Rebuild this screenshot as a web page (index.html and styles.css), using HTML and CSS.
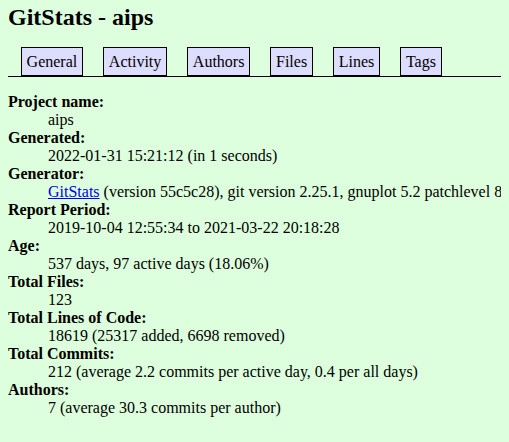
FILE: index.html
```html
<!DOCTYPE html>
<html class="root">
<head>
<meta charset="utf-8">
<title>GitStats - aips</title>
<link rel="stylesheet" href="styles.css">
</head>
<body class="page">
<h1 class="title">GitStats - aips</h1>
<div class="nav">
<ul class="nav-list">
<li class="nav-item"><a class="nav-link" href="#">General</a></li>
<li class="nav-item"><a class="nav-link" href="#">Activity</a></li>
<li class="nav-item"><a class="nav-link" href="#">Authors</a></li>
<li class="nav-item"><a class="nav-link" href="#">Files</a></li>
<li class="nav-item"><a class="nav-link" href="#">Lines</a></li>
<li class="nav-item"><a class="nav-link" href="#">Tags</a></li>
</ul>
</div>
<dl class="info">
<dt class="label">Project name</dt><dd class="value">aips</dd>
<dt class="label">Generated</dt><dd class="value">2022-01-31 15:21:12 (in 1 seconds)</dd>
<dt class="label">Generator</dt><dd class="value value-long"><a class="link" href="#">GitStats</a> (version 55c5c28), git version 2.25.1, gnuplot 5.2 patchlevel 8</dd>
<dt class="label">Report Period</dt><dd class="value">2019-10-04 12:55:34 to 2021-03-22 20:18:28</dd>
<dt class="label">Age</dt><dd class="value">537 days, 97 active days (18.06%)</dd>
<dt class="label">Total Files</dt><dd class="value">123</dd>
<dt class="label">Total Lines of Code</dt><dd class="value">18619 (25317 added, 6698 removed)</dd>
<dt class="label">Total Commits</dt><dd class="value">212 (average 2.2 commits per active day, 0.4 per all days)</dd>
<dt class="label">Authors</dt><dd class="value">7 (average 30.3 commits per author)</dd>
</dl>
</body>
</html>
```

FILE: styles.css
```css
.root {
  overflow: hidden;
}

.page {
  margin: 4px 8px 8px 8px;
  color: black;
  background-color: #dfd;
  font-family: "Liberation Serif", "Times New Roman", serif;
  font-size: 16px;
  line-height: 18px;
}

.title {
  font-size: 24px;
  line-height: 26px;
  font-weight: bold;
  margin: 0 0 18px 0;
}

.nav {
  border-bottom: 1px solid black;
  padding: 0.3em;
}

.nav-list {
  list-style-type: none;
  display: inline;
  margin: 0;
  padding: 0;
}

.nav-item {
  display: inline;
}

.nav-link {
  padding: 0.3em;
  text-decoration: none;
  color: black;
  border: 1px solid black;
  margin: 0.5em;
  background-color: #ddf;
}

.info {
  margin: 16px 0 16px 0;
}

.label {
  font-weight: bold;
  float: left;
  margin-right: 1em;
}

.label::after {
  content: ': ';
}

.value {
  display: block;
  clear: left;
  margin-left: 40px;
}

.value-long {
  white-space: nowrap;
}

.link {
  color: #00e;
}
```
